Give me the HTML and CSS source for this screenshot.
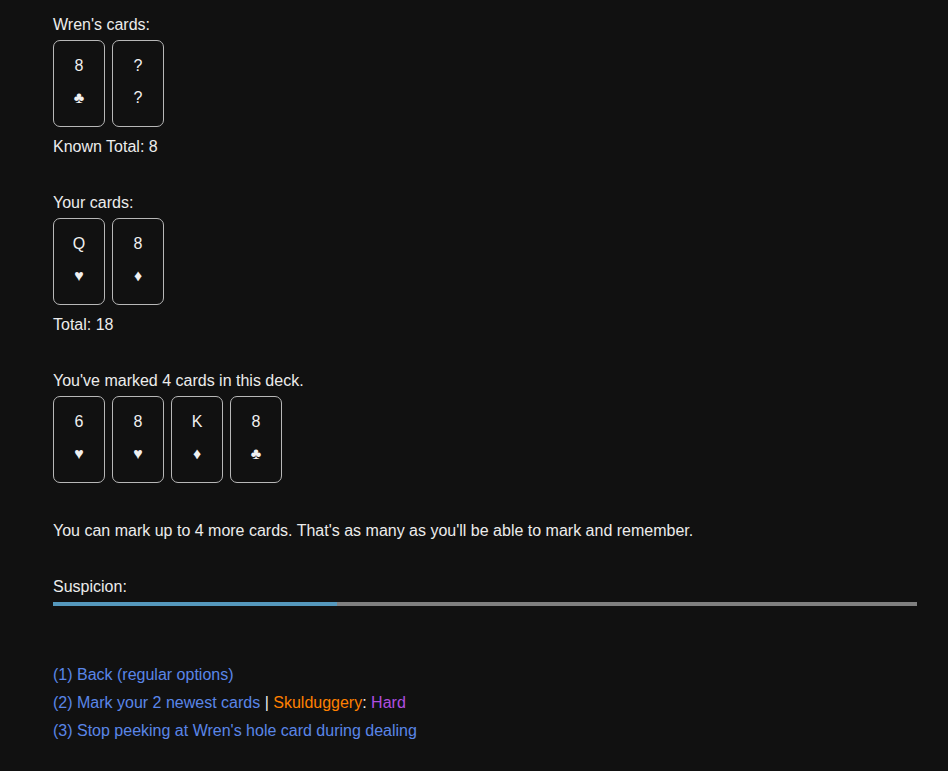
FILE: index.html
```html
<!DOCTYPE html>
<html>
<head>
<meta charset="utf-8">
<link rel="stylesheet" href="styles.css">
</head>
<body>
<div class="page">
  <section class="hand">
    <div class="label">Wren's cards:</div>
    <div class="cards">
      <div class="card"><span class="rank">8</span><span class="suit">♣</span></div>
      <div class="card"><span class="rank">?</span><span class="suit">?</span></div>
    </div>
    <div class="total">Known Total: 8</div>
  </section>
  <section class="hand">
    <div class="label">Your cards:</div>
    <div class="cards">
      <div class="card"><span class="rank">Q</span><span class="suit">♥</span></div>
      <div class="card"><span class="rank">8</span><span class="suit">♦</span></div>
    </div>
    <div class="total">Total: 18</div>
  </section>
  <section class="hand">
    <div class="label">You've marked 4 cards in this deck.</div>
    <div class="cards">
      <div class="card"><span class="rank">6</span><span class="suit">♥</span></div>
      <div class="card"><span class="rank">8</span><span class="suit">♥</span></div>
      <div class="card"><span class="rank">K</span><span class="suit">♦</span></div>
      <div class="card"><span class="rank">8</span><span class="suit">♣</span></div>
    </div>
  </section>
  <p class="note">You can mark up to 4 more cards. That's as many as you'll be able to mark and remember.</p>
  <div class="suspicion">
    <div class="label">Suspicion:</div>
    <div class="bar"><div class="fill" style="width: 32.9%"></div></div>
  </div>
  <ul class="options">
    <li><span class="opt">(1) Back (regular options)</span></li>
    <li><span class="opt">(2) Mark your 2 newest cards</span> <span class="sep">|</span> <span class="skill">Skulduggery</span><span class="sep">:</span> <span class="diff">Hard</span></li>
    <li><span class="opt">(3) Stop peeking at Wren's hole card during dealing</span></li>
  </ul>
</div>
</body>
</html>
```
FILE: styles.css
```css
html, body {
  margin: 0;
  background: #111111;
}
body {
  font-family: "Liberation Sans", Arial, sans-serif;
  font-size: 16px;
  line-height: 20px;
  color: #ececec;
}
.page {
  padding: 15px 31px 20px 53px;
}
.hand {
  margin-bottom: 36px;
}
.hand:nth-of-type(3) {
  margin-bottom: 0;
}
.cards {
  display: flex;
  gap: 7px;
  margin-top: 5px;
}
.total {
  margin-top: 10px;
}
.card {
  box-sizing: border-box;
  width: 52px;
  height: 87px;
  border: 1px solid #b8b8b8;
  border-radius: 7px;
  padding-top: 15px;
  display: flex;
  flex-direction: column;
  align-items: center;
  gap: 12px;
  color: #f0f0f0;
}
.rank, .suit {
  line-height: 20px;
}
.suit {
  font-size: 16px;
}
.note {
  margin: 38px 0 0 0;
}
.suspicion {
  margin-top: 36px;
}
.bar {
  margin-top: 5px;
  height: 4px;
  background: #808080;
}
.fill {
  height: 100%;
  background: #5598bd;
}
.options {
  list-style: none;
  margin: 55px 0 0 0;
  padding: 0;
}
.options li {
  line-height: 28px;
}
.opt {
  color: #5a86e8;
}
.sep {
  color: #ececec;
}
.skill {
  color: #ff8000;
}
.diff {
  color: #b04ee0;
}
```
